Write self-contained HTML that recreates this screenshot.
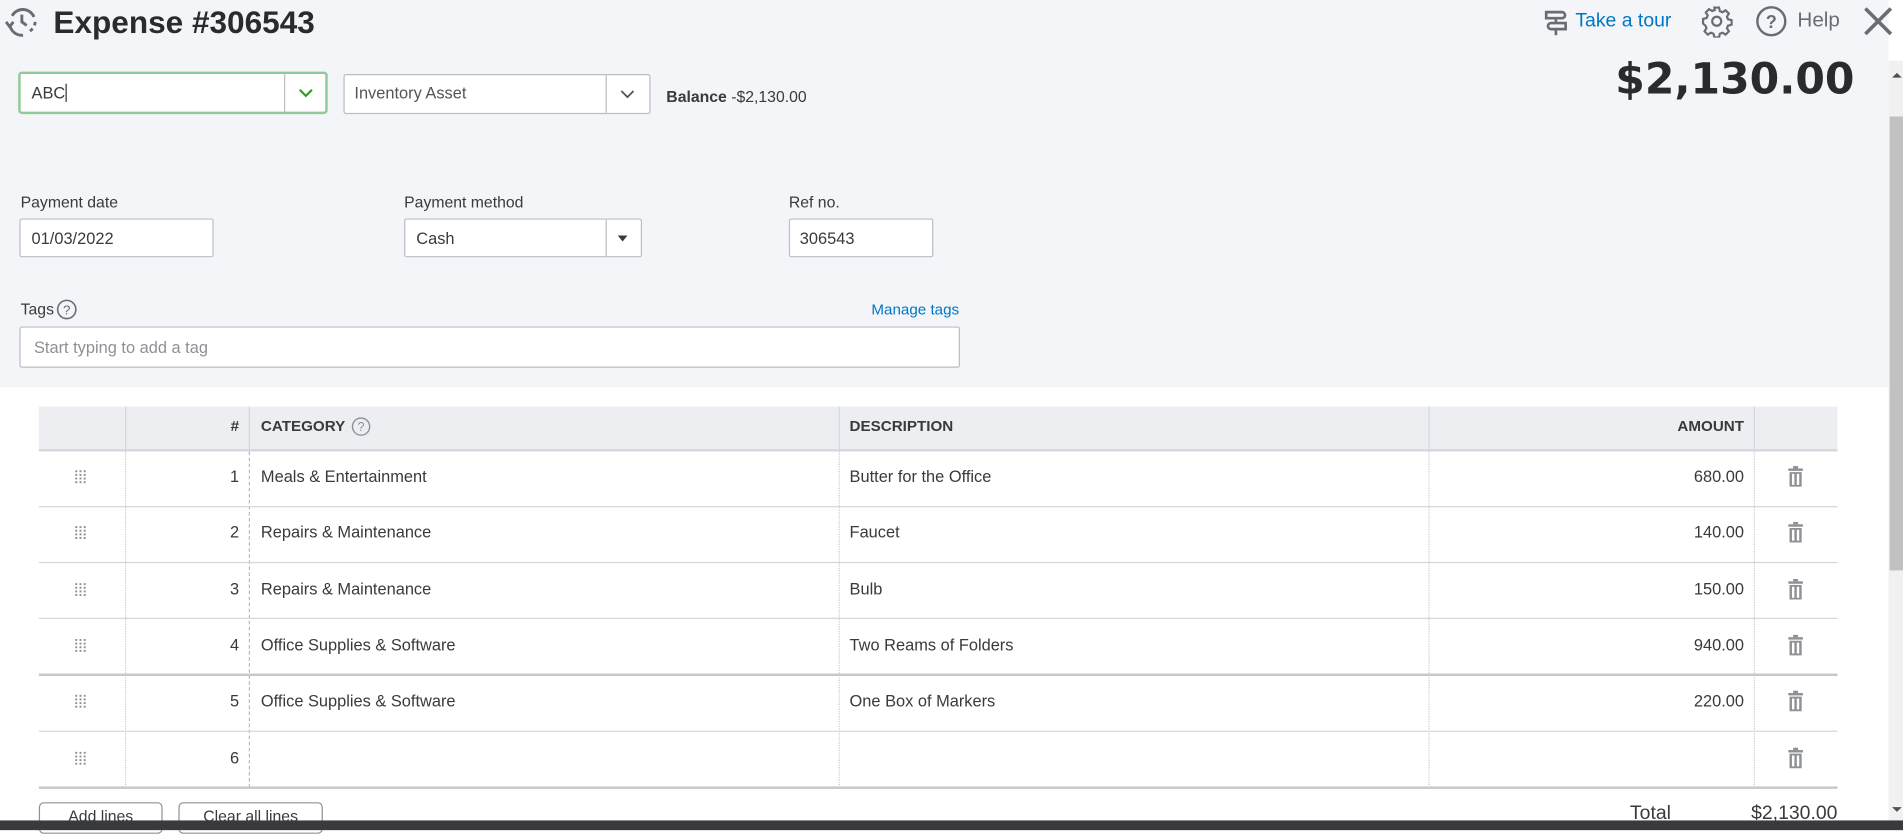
<!DOCTYPE html>
<html><head><meta charset="utf-8"><style>
*{margin:0;padding:0;box-sizing:border-box}
html,body{width:1903px;height:830px;overflow:hidden;background:#fff}
#w{position:absolute;left:0;top:0;width:1568px;height:684px;transform:scale(1.21365);transform-origin:0 0;font-family:"Liberation Sans",sans-serif;color:#393a3d;font-size:13px}
.a{position:absolute}
.top{left:0;top:0;width:1556px;height:319px;background:#f4f5f8}
.inp{position:absolute;background:#fff;border:1px solid #babec5;border-radius:2px}
.lbl{position:absolute;font-size:13px;color:#393a3d}
.t{position:absolute;font-size:13.5px;color:#393a3d;white-space:nowrap}
.hl{position:absolute;left:32px;width:1482px;height:1px;background:#d4d7dc}
.vl{position:absolute;width:0;border-left:1px dotted #c8cbd0}
.btn{position:absolute;top:661px;height:26px;border:1px solid #8d9096;border-radius:4px;background:#fff;font-size:13px;text-align:center;line-height:22px}
</style></head><body><div id="w">
<div class="a top"></div>
<svg class="a" style="left:4px;top:5px" width="28" height="26" viewBox="0 0 28 26" fill="none" stroke="#6b6c72" stroke-width="2.4"><path d="M6 8 A10 10 0 0 1 24 9" /><path d="M25 13 A10 10 0 0 1 20 21" stroke-dasharray="3 3"/><path d="M15 24 A10 10 0 0 1 4 15"/><path d="M1 13 L4 17 L7 13"/><path d="M14 7 V13 L18 16"/></svg>
<div class="t" style="left:44px;top:3px;font-size:26px;font-weight:bold;color:#2a2b2e">Expense #306543</div>
<svg class="a" style="left:1270px;top:7px" width="24" height="24" viewBox="0 0 24 24" fill="none" stroke="#6b6c72" stroke-width="2.2"><path d="M4 3 H17 A2.5 2.5 0 0 1 17 8 H4 Z"/><path d="M20 12 H8 A2.5 2.5 0 0 0 8 17 H20 Z"/><path d="M12 8 V12 M12 17 V22"/></svg>
<div class="t" style="left:1298px;top:9px;font-size:16px;color:#0077c5">Take a tour</div>
<svg class="a" style="left:1401px;top:4px" width="27" height="27" viewBox="0 0 24 24" fill="none" stroke="#6b6c72" stroke-width="1.6"><circle cx="12" cy="12" r="3.3"/><path d="M10.3 2h3.4l.6 2.6 1.9.8 2.3-1.4 2.4 2.4-1.4 2.3.8 1.9 2.6.6v3.4l-2.6.6-.8 1.9 1.4 2.3-2.4 2.4-2.3-1.4-1.9.8-.6 2.6h-3.4l-.6-2.6-1.9-.8-2.3 1.4-2.4-2.4 1.4-2.3-.8-1.9L2 13.7v-3.4l2.6-.6.8-1.9-1.4-2.3 2.4-2.4 2.3 1.4 1.9-.8z"/></svg>
<svg class="a" style="left:1446px;top:4px" width="27" height="27" viewBox="0 0 27 27"><circle cx="13.5" cy="13.5" r="11.5" fill="none" stroke="#6b6c72" stroke-width="2"/><text x="13.5" y="19" text-anchor="middle" font-family="Liberation Sans" font-weight="bold" font-size="15" fill="#6b6c72">?</text></svg>
<div class="t" style="left:1481px;top:7px;font-size:17px;color:#6b6c72">Help</div>
<svg class="a" style="left:1535px;top:5px" width="25" height="25" viewBox="0 0 25 25" stroke="#6b6c72" stroke-width="3"><path d="M2 2 L23 23 M23 2 L2 23"/></svg>
<div class="t" style="right:40px;top:46px;font-size:35px;font-weight:bold;color:#2a2b2e;font-family:'DejaVu Sans','Liberation Sans',sans-serif">$2,130.00</div>
<div class="a" style="left:1556px;top:50px;width:12px;height:634px;background:#f1f1f1"></div>
<div class="a" style="left:1557px;top:96px;width:11px;height:374px;background:#c1c1c1"></div>
<div class="a" style="left:1559px;top:60px;border:4px solid transparent;border-bottom:4px solid #505050;border-top:0"></div>
<div class="a" style="left:1559px;top:665px;border:4px solid transparent;border-top:4px solid #505050;border-bottom:0"></div>
<div class="inp" style="left:15px;top:59px;width:255px;height:35px;border:2px solid #8fca98;border-radius:3px"></div>
<div class="a" style="left:234px;top:61px;width:1px;height:31px;background:#babec5"></div>
<div class="t" style="left:26px;top:69px">ABC<span style="border-left:1px solid #333;margin-left:0"></span></div>
<svg class="a" style="left:245px;top:72px" width="14" height="10" viewBox="0 0 14 10" fill="none" stroke="#2ca01c" stroke-width="1.8"><path d="M2 2 L7 7 L12 2"/></svg>
<div class="inp" style="left:283px;top:61px;width:253px;height:33px"></div>
<div class="a" style="left:499px;top:62px;width:1px;height:31px;background:#babec5"></div>
<div class="t" style="left:292px;top:69px;color:#555">Inventory Asset</div>
<svg class="a" style="left:510px;top:73px" width="14" height="10" viewBox="0 0 14 10" fill="none" stroke="#555" stroke-width="1.5"><path d="M2 2 L7 7 L12 2"/></svg>
<div class="t" style="left:549px;top:72px;font-size:13px"><b style="font-weight:bold">Balance</b> -$2,130.00</div>
<div class="lbl" style="left:17px;top:159px">Payment date</div>
<div class="lbl" style="left:333px;top:159px">Payment method</div>
<div class="lbl" style="left:650px;top:159px">Ref no.</div>
<div class="inp" style="left:16px;top:180px;width:160px;height:32px"></div>
<div class="t" style="left:26px;top:189px">01/03/2022</div>
<div class="inp" style="left:333px;top:180px;width:196px;height:32px"></div>
<div class="a" style="left:499px;top:181px;width:1px;height:30px;background:#babec5"></div>
<div class="t" style="left:343px;top:189px">Cash</div>
<div class="a" style="left:509px;top:194px;border:4px solid transparent;border-top:5px solid #393a3d;border-bottom:0"></div>
<div class="inp" style="left:650px;top:180px;width:119px;height:32px"></div>
<div class="t" style="left:659px;top:189px">306543</div>
<div class="lbl" style="left:17px;top:247px">Tags</div>
<svg class="a" style="left:46px;top:246px" width="18" height="18" viewBox="0 0 18 18"><circle cx="9" cy="9" r="7.5" fill="none" stroke="#6b6c72" stroke-width="1.3"/><text x="9" y="13" text-anchor="middle" font-family="Liberation Sans" font-size="11" fill="#6b6c72">?</text></svg>
<div class="t" style="left:718px;top:248px;font-size:12.5px;color:#0077c5">Manage tags</div>
<div class="inp" style="left:16px;top:269px;width:775px;height:34px"></div>
<div class="t" style="left:28px;top:279px;color:#8d9096">Start typing to add a tag</div>
<div class="a" style="left:32px;top:335px;width:1482px;height:35px;background:#eceef1"></div>
<div class="a" style="left:32px;top:370px;width:1482px;height:2px;background:#d4d7dc"></div>
<div class="a" style="left:103px;top:335px;width:1px;height:36px;background:#d4d7dc"></div>
<div class="a" style="left:205px;top:335px;width:1px;height:36px;background:#d4d7dc"></div>
<div class="a" style="left:691px;top:335px;width:1px;height:36px;background:#d4d7dc"></div>
<div class="a" style="left:1177px;top:335px;width:1px;height:36px;background:#d4d7dc"></div>
<div class="a" style="left:1445px;top:335px;width:1px;height:36px;background:#d4d7dc"></div>
<div class="t" style="left:185px;top:344px;width:12px;text-align:right;font-weight:bold;font-size:12.5px">#</div>
<div class="t" style="left:215px;top:344px;font-weight:bold;font-size:12.5px">CATEGORY</div>
<svg class="a" style="left:289px;top:343px" width="17" height="17" viewBox="0 0 18 18"><circle cx="9" cy="9" r="7.5" fill="none" stroke="#8d9096" stroke-width="1.2"/><text x="9" y="13" text-anchor="middle" font-family="Liberation Sans" font-size="11" fill="#8d9096">?</text></svg>
<div class="t" style="left:700px;top:344px;font-weight:bold;font-size:12.5px">DESCRIPTION</div>
<div class="t" style="left:1337px;top:344px;width:100px;text-align:right;font-weight:bold;font-size:12.5px">AMOUNT</div>
<div class="vl" style="left:103px;top:372px;height:277px"></div>
<div class="vl" style="left:205px;top:372px;height:277px;border-left:1px dashed #b8bbc0"></div>
<div class="vl" style="left:691px;top:372px;height:277px"></div>
<div class="vl" style="left:1177px;top:372px;height:277px"></div>
<div class="vl" style="left:1445px;top:372px;height:277px"></div>
<div class="hl" style="top:417px"></div>
<div class="hl" style="top:463px"></div>
<div class="hl" style="top:509px"></div>
<div class="hl" style="top:555px;height:2px;background:#c4c7cc"></div>
<div class="hl" style="top:602px"></div>
<div class="hl" style="top:648px;height:2px;background:#c4c7cc"></div>
<div id="rows"></div>
<div class="btn" style="left:32px;width:102px">Add lines</div>
<div class="btn" style="left:147px;width:119px">Clear all lines</div>
<div class="t" style="left:1343px;top:662px;font-size:16px">Total</div>
<div class="t" style="left:1400px;top:662px;width:114px;text-align:right;font-size:16px">$2,130.00</div>
<div class="a" style="left:0;top:676px;width:1568px;height:8px;background:#393a3d"></div>
<script>
var d=[["1","Meals & Entertainment","Butter for the Office","680.00"],["2","Repairs & Maintenance","Faucet","140.00"],["3","Repairs & Maintenance","Bulb","150.00"],["4","Office Supplies & Software","Two Reams of Folders","940.00"],["5","Office Supplies & Software","One Box of Markers","220.00"],["6","","",""]];
var ys=[393,439,486,532,578,625],h="";
d.forEach(function(r,i){var y=ys[i];
h+='<svg class="a" style="left:61px;top:'+(y-6)+'px" width="10" height="12" viewBox="0 0 10 12" fill="#8d9096">';
for(var a=0;a<3;a++)for(var b=0;b<4;b++)h+='<rect x="'+(a*3.5+1)+'" y="'+(b*3+0.5)+'" width="1.6" height="1.6"/>';
h+='</svg>';
h+='<div class="t" style="left:170px;top:'+(y-8)+'px;width:27px;text-align:right">'+r[0]+'</div>';
h+='<div class="t" style="left:215px;top:'+(y-8)+'px">'+r[1].replace("&","&amp;")+'</div>';
h+='<div class="t" style="left:700px;top:'+(y-8)+'px">'+r[2]+'</div>';
h+='<div class="t" style="left:1337px;top:'+(y-8)+'px;width:100px;text-align:right">'+r[3]+'</div>';
h+='<svg class="a" style="left:1473px;top:'+(y-9)+'px" width="13" height="18" viewBox="0 0 13 18" fill="#8d9096"><rect x="0.5" y="2" width="12" height="2"/><rect x="4.5" y="0" width="4" height="2"/><path d="M1.5 5 H11.5 V17 H1.5 Z M3.5 6.5 V15.5 H5.5 V6.5 Z M7.5 6.5 V15.5 H9.5 V6.5 Z" fill-rule="evenodd"/></svg>';
});
document.getElementById("rows").innerHTML=h;
</script>
</div></body></html>
